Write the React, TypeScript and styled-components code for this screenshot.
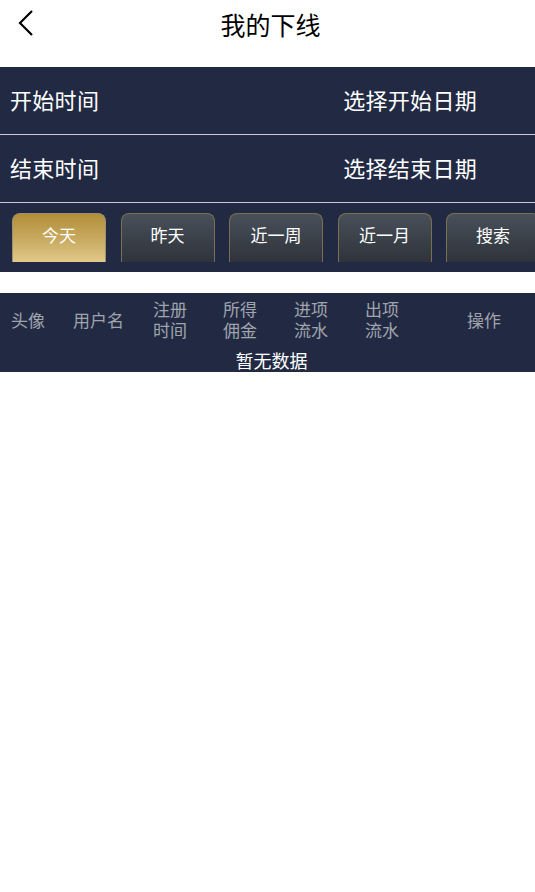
import React from 'react';
import styled, { createGlobalStyle } from 'styled-components';

const GlobalStyle = createGlobalStyle`
  body {
    margin: 0;
    background: #ffffff;
    font-family: "Noto Sans CJK SC", "Noto Sans", sans-serif;
  }
`;

const Page = styled.div`
  width: 535px;
  min-height: 892px;
  background: #ffffff;
`;

const Header = styled.div`
  height: 67px;
  display: flex;
  align-items: flex-start;
  justify-content: center;
  position: relative;
`;

const Title = styled.div`
  font-size: 25px;
  line-height: 48px;
  color: #000000;
  margin-left: 6px;
`;

const BackButton = styled.div`
  position: absolute;
  left: 15px;
  top: 7px;
  width: 24px;
  height: 32px;
`;

const FilterPanel = styled.div`
  background: #212a42;
`;

const DateRow = styled.div`
  height: 68px;
  display: flex;
  align-items: center;
  justify-content: space-between;
  padding: 0 58px 4px 10px;
  box-sizing: border-box;
  border-bottom: 1px solid #c9ccd4;
  color: #ffffff;
  font-size: 22px;
  letter-spacing: 0.3px;
`;

const QuickBar = styled.div`
  height: 69px;
  display: flex;
  gap: 14.5px;
  padding: 10px 0 0 12px;
  box-sizing: border-box;
  overflow: hidden;
`;

const QuickButton = styled.div<{ $active?: boolean }>`
  flex: 0 0 94px;
  height: 49px;
  box-sizing: border-box;
  border-radius: 8px 8px 0 0;
  border: 1px solid ${(p) => (p.$active ? '#9a9174' : '#7a704f')};
  border-bottom: none;
  background: ${(p) =>
    p.$active
      ? 'linear-gradient(180deg, #b18f38 0%, #c9ab62 55%, #e2c98a 100%)'
      : 'linear-gradient(180deg, #48505a 0%, #3a4048 55%, #2f343b 100%)'};
  color: #ffffff;
  font-size: 17px;
  display: flex;
  align-items: center;
  justify-content: center;
  padding-bottom: 8px;
`;

const Spacer = styled.div`
  height: 21px;
`;

const Table = styled.div`
  background: #212a42;
  height: 79px;
`;

const HeadRow = styled.div`
  display: grid;
  grid-template-columns: 62px 80px 70px 71px 71px 102px 1fr;
  align-items: center;
  padding: 5px 0 0 11px;
  height: 47px;
  box-sizing: border-box;
`;

const HeadCell = styled.div`
  color: #a0a4ad;
  font-size: 17px;
  line-height: 21px;
  white-space: pre-line;
`;

const Empty = styled.div`
  text-align: center;
  color: #ffffff;
  font-size: 18px;
  line-height: 24px;
  padding: 8px 0 0 8px;
`;

const quick = ['今天', '昨天', '近一周', '近一月', '搜索'];
const columns = ['头像', '用户名', '注册\n时间', '所得\n佣金', '进项\n流水', '出项\n流水', '操作'];

export default function App() {
  const [active, setActive] = React.useState('今天');

  return (
    <Page>
      <GlobalStyle />
      <Header>
        <BackButton>
          <svg width="24" height="32" viewBox="0 0 24 32">
            <path d="M17 4 L5 16 L17 28" fill="none" stroke="#000" strokeWidth="2.2" />
          </svg>
        </BackButton>
        <Title>我的下线</Title>
      </Header>
      <FilterPanel>
        <DateRow>
          <span>开始时间</span>
          <span>选择开始日期</span>
        </DateRow>
        <DateRow>
          <span>结束时间</span>
          <span>选择结束日期</span>
        </DateRow>
        <QuickBar>
          {quick.map((q) => (
            <QuickButton key={q} $active={active === q} onClick={() => setActive(q)}>
              {q}
            </QuickButton>
          ))}
        </QuickBar>
      </FilterPanel>
      <Spacer />
      <Table>
        <HeadRow>
          {columns.map((c) => (
            <HeadCell key={c}>{c}</HeadCell>
          ))}
        </HeadRow>
        <Empty>暂无数据</Empty>
      </Table>
    </Page>
  );
}
